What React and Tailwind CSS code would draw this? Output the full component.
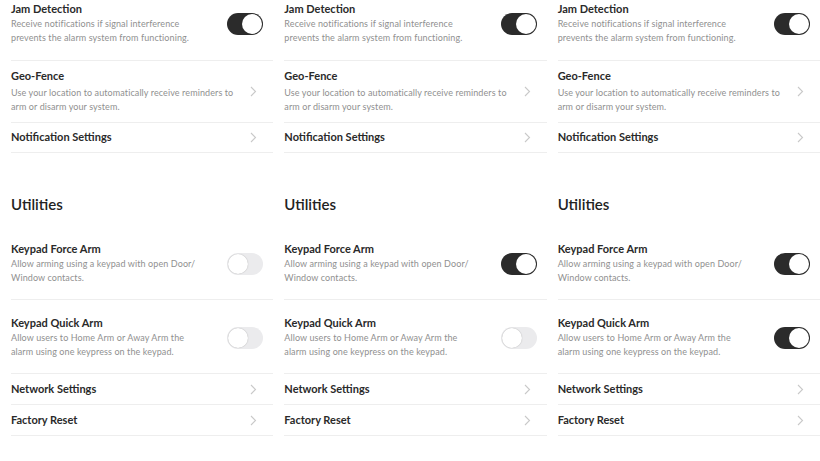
const font = { fontFamily: 'Lato, "Open Sans", sans-serif' };

function Toggle({ on }) {
  return on ? (
    <div className="flex h-[22px] w-[36px] shrink-0 items-center justify-end rounded-full bg-[#2b2b2b] p-[1px]">
      <div className="h-[20px] w-[20px] rounded-full bg-white" />
    </div>
  ) : (
    <div className="flex h-[22px] w-[36px] shrink-0 items-center justify-start rounded-full bg-[#ebebed] p-[1px]">
      <div className="h-[20px] w-[20px] rounded-full bg-white shadow-[0_0_1px_rgba(0,0,0,0.35)]" />
    </div>
  );
}

function Chevron() {
  return (
    <svg width="7" height="11" viewBox="0 0 7 11" className="shrink-0">
      <path d="M1 1l4.5 4.5L1 10" fill="none" stroke="#c9c9c9" strokeWidth="1.1" />
    </svg>
  );
}

function ToggleRow({ title, lines, on, bottom = 'pb-[14px]' }) {
  return (
    <div className={`flex items-center border-b border-[#eeeeee] pt-[16px] ${bottom}`}>
      <div className="flex-1">
        <div className="text-[11px] font-bold leading-[14px] text-[#2a2a2a]">{title}</div>
        <div className="mt-[1px] text-[9px] leading-[14px] tracking-[0.1px] text-[#909090]">
          {lines[0]}
          <br />
          {lines[1]}
        </div>
      </div>
      <div className="mr-[10px]">
        <Toggle on={on} />
      </div>
    </div>
  );
}

function LinkRow({ title, lines, top = 'pt-[8px]' }) {
  return (
    <div className={`flex items-center border-b border-[#eeeeee] pb-[8px] ${top}`}>
      <div className="flex-1">
        <div className="text-[11px] font-bold leading-[14px] text-[#2a2a2a]">{title}</div>
        {lines && (
          <div className="mt-[3px] text-[9px] leading-[14px] tracking-[0.1px] text-[#909090]">
            {lines[0]}
            <br />
            {lines[1]}
          </div>
        )}
      </div>
      <div className="mr-[16px]">
        <Chevron />
      </div>
    </div>
  );
}

function Column({ force, quick }) {
  return (
    <div className="-mt-[14px] pl-[11px]">
      <ToggleRow
        title="Jam Detection"
        lines={['Receive notifications if signal interference', 'prevents the alarm system from functioning.']}
        on
        bottom="pb-[15px]"
      />
      <LinkRow
        title="Geo-Fence"
        lines={['Use your location to automatically receive reminders to', 'arm or disarm your system.']}
      />
      <LinkRow title="Notification Settings" top="pt-[7px]" />

      <h2 className="mt-[41px] mb-[12px] text-[15px] font-semibold leading-[20px] text-[#222222]">Utilities</h2>

      <ToggleRow
        title="Keypad Force Arm"
        lines={['Allow arming using a keypad with open Door/', 'Window contacts.']}
        on={force}
      />
      <ToggleRow
        title="Keypad Quick Arm"
        lines={['Allow users to Home Arm or Away Arm the', 'alarm using one keypress on the keypad.']}
        on={quick}
      />
      <LinkRow title="Network Settings" />
      <LinkRow title="Factory Reset" />
    </div>
  );
}

export default function App() {
  return (
    <div className="h-[461px] w-[820px] overflow-hidden bg-white" style={font}>
      <div className="grid grid-cols-3">
        <Column force={false} quick={false} />
        <Column force quick={false} />
        <Column force quick />
      </div>
    </div>
  );
}
